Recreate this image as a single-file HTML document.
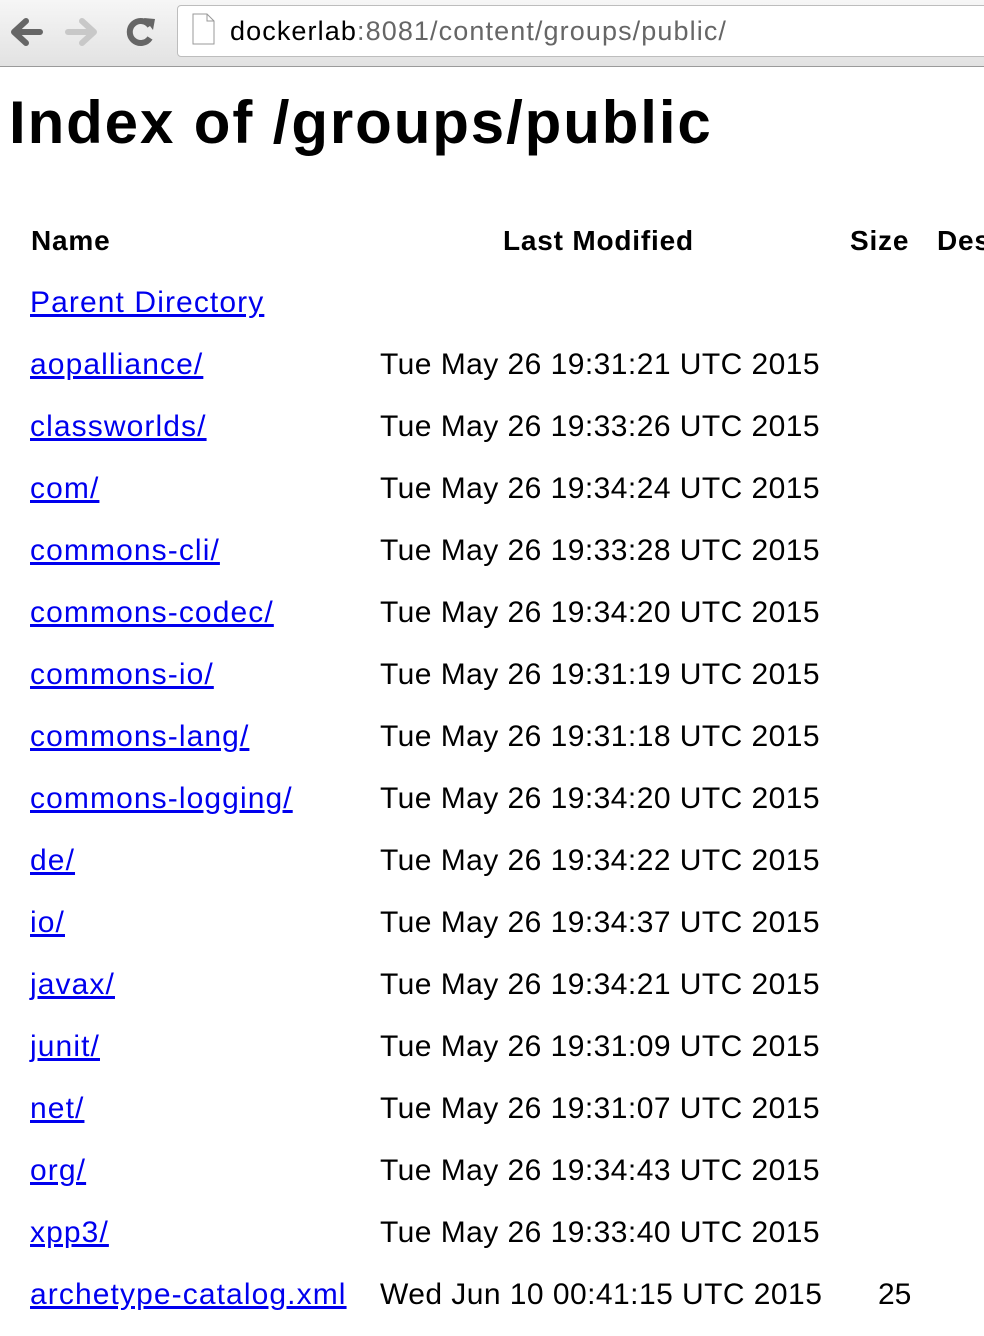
<!DOCTYPE html>
<html><head><meta charset="utf-8"><style>
body{margin:0;width:984px;height:1336px;overflow:hidden;background:#fff;font-family:"Liberation Sans",sans-serif;}
.bar{position:absolute;left:0;top:0;width:984px;height:66px;background:linear-gradient(#f6f6f6,#e2e2e2);border-bottom:1px solid #9a9a9a;overflow:hidden}
.url{position:absolute;left:177px;top:5px;width:830px;height:50px;background:#fff;border:1px solid #bdbdbd;border-radius:4px;}
.url span{position:absolute;left:52px;top:10px;font-size:27px;color:#666;letter-spacing:1.1px}
.url b{font-weight:normal;color:#000}
h1{position:absolute;left:9px;top:88px;margin:0;font-size:60px;font-weight:bold;letter-spacing:1.9px}
.r{position:absolute;left:0;width:984px;height:40px;font-size:30px;white-space:nowrap;overflow:hidden}
.r a{position:absolute;left:30px;color:#0000ee;text-decoration:underline;letter-spacing:1.1px}
.r .d{position:absolute;left:380px;color:#000;letter-spacing:0.45px}
.r .s{position:absolute;left:878px}
.h{font-weight:bold;font-size:28px;letter-spacing:0.8px}
</style></head><body>
<div class="bar">
<svg width="170" height="66" style="position:absolute;left:0;top:0">
<path d="M40 32H16M26 21L14 32L26 43" stroke="#666" stroke-width="6" fill="none" stroke-linecap="round" stroke-linejoin="round"/>
<path d="M68 32H92M82 21L94 32L82 43" stroke="#c8c8c8" stroke-width="6" fill="none" stroke-linecap="round" stroke-linejoin="round"/>
<path d="M150 26A11 11 0 1 0 150 38" stroke="#666" stroke-width="6" fill="none"/>
<path d="M144 18L155 19L153 30Z" fill="#666"/>
</svg>
<div class="url"><svg width="30" height="36" style="position:absolute;left:14px;top:7px"><path d="M1 1H15L22 8V31H1Z" fill="#fff" stroke="#999"/><path d="M15 1V8H22" fill="none" stroke="#999"/></svg><span><b>dockerlab</b>:8081/content/groups/public/</span></div>
</div>
<h1>Index of /groups/public</h1>
<div class="r h" style="top:225px"><span style="position:absolute;left:31px">Name</span><span style="position:absolute;left:503px">Last Modified</span><span style="position:absolute;left:850px">Size</span><span style="position:absolute;left:937px">Description</span></div>
<div class="r" style="top:286px"><a>Parent Directory</a></div>
<div class="r" style="top:348px"><a>aopalliance/</a><span class="d">Tue May 26 19:31:21 UTC 2015</span></div>
<div class="r" style="top:410px"><a>classworlds/</a><span class="d">Tue May 26 19:33:26 UTC 2015</span></div>
<div class="r" style="top:472px"><a>com/</a><span class="d">Tue May 26 19:34:24 UTC 2015</span></div>
<div class="r" style="top:534px"><a>commons-cli/</a><span class="d">Tue May 26 19:33:28 UTC 2015</span></div>
<div class="r" style="top:596px"><a>commons-codec/</a><span class="d">Tue May 26 19:34:20 UTC 2015</span></div>
<div class="r" style="top:658px"><a>commons-io/</a><span class="d">Tue May 26 19:31:19 UTC 2015</span></div>
<div class="r" style="top:720px"><a>commons-lang/</a><span class="d">Tue May 26 19:31:18 UTC 2015</span></div>
<div class="r" style="top:782px"><a>commons-logging/</a><span class="d">Tue May 26 19:34:20 UTC 2015</span></div>
<div class="r" style="top:844px"><a>de/</a><span class="d">Tue May 26 19:34:22 UTC 2015</span></div>
<div class="r" style="top:906px"><a>io/</a><span class="d">Tue May 26 19:34:37 UTC 2015</span></div>
<div class="r" style="top:968px"><a>javax/</a><span class="d">Tue May 26 19:34:21 UTC 2015</span></div>
<div class="r" style="top:1030px"><a>junit/</a><span class="d">Tue May 26 19:31:09 UTC 2015</span></div>
<div class="r" style="top:1092px"><a>net/</a><span class="d">Tue May 26 19:31:07 UTC 2015</span></div>
<div class="r" style="top:1154px"><a>org/</a><span class="d">Tue May 26 19:34:43 UTC 2015</span></div>
<div class="r" style="top:1216px"><a>xpp3/</a><span class="d">Tue May 26 19:33:40 UTC 2015</span></div>
<div class="r" style="top:1278px"><a>archetype-catalog.xml</a><span class="d">Wed Jun 10 00:41:15 UTC 2015</span><span class="s">25</span></div>
</body></html>
